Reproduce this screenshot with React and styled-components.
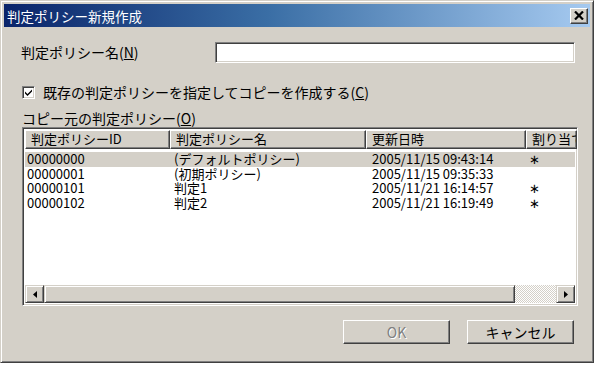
import React from 'react'
import styled, { createGlobalStyle } from 'styled-components'

const Global = createGlobalStyle`
  html, body {
    margin: 0;
    background: #ffffff;
  }
  body {
    font-family: "Noto Sans CJK JP", "Liberation Sans", sans-serif;
    font-size: 13px;
    color: #000;
  }
`

const Window = styled.div`
  width: 594px;
  height: 363px;
  box-sizing: border-box;
  background: #d4d0c8;
  border: 1px solid;
  border-color: #d4d0c8 #404040 #404040 #d4d0c8;
  box-shadow: inset 1px 1px 0 #ffffff, inset -1px -1px 0 #808080;
  padding: 3px;
  display: flex;
  flex-direction: column;
`

const TitleBar = styled.div`
  height: 23px;
  display: flex;
  align-items: center;
  justify-content: space-between;
  padding: 0 2px 0 3px;
  background: linear-gradient(to right, #0a246a 0%, #3a6ea5 45%, #a6caf0 100%);
  color: #fff;
  font-size: 13.5px;
`

const CloseButton = styled.div`
  width: 18px;
  height: 16px;
  box-sizing: border-box;
  background: #d4d0c8;
  border: 1px solid;
  border-color: #ffffff #404040 #404040 #ffffff;
  box-shadow: inset -1px -1px 0 #808080;
  display: flex;
  align-items: center;
  justify-content: center;
`

const Body = styled.div`
  flex: 1;
  display: flex;
  flex-direction: column;
  padding: 15px 15px 0 17px;
`

const FieldRow = styled.div`
  display: flex;
  align-items: center;
  height: 21px;
`

const Label = styled.span`
  white-space: nowrap;
  font-size: 14px;
  line-height: 15px;
`

const Key = styled.span`
  text-decoration: underline;
  text-underline-offset: 1px;
`

const TextInput = styled.div`
  margin-left: auto;
  width: 360px;
  height: 21px;
  box-sizing: border-box;
  background: #fff;
  border: 1px solid;
  border-color: #808080 #ffffff #ffffff #808080;
  box-shadow: inset 1px 1px 0 #404040, inset -1px -1px 0 #d4d0c8;
`

const CheckRow = styled.div`
  display: flex;
  align-items: center;
  gap: 8px;
  margin-top: 22px;
  padding-left: 1px;
  height: 15px;
`

const CheckBox = styled.div`
  width: 13px;
  height: 13px;
  box-sizing: border-box;
  background: #fff;
  border: 1px solid;
  border-color: #808080 #ffffff #ffffff #808080;
  box-shadow: inset 1px 1px 0 #404040, inset -1px -1px 0 #d4d0c8;
  display: flex;
  align-items: center;
  justify-content: center;
`

const SectionLabel = styled.div`
  margin-top: 11px;
  padding-left: 1px;
  height: 16px;
  font-size: 14px;
  line-height: 15px;
  white-space: nowrap;
`

const ListBox = styled.div`
  margin-left: 1px;
  width: 556px;
  height: 179px;
  box-sizing: border-box;
  background: #fff;
  border: 1px solid;
  border-color: #808080 #ffffff #ffffff #808080;
  box-shadow: inset 1px 1px 0 #404040, inset -1px -1px 0 #d4d0c8;
  padding: 2px;
  display: flex;
  flex-direction: column;
  overflow: hidden;
`

const Header = styled.div`
  display: grid;
  grid-template-columns: 145px 196px 160px 51px;
  height: 19px;
  flex-shrink: 0;
`

const HeaderCell = styled.div`
  box-sizing: border-box;
  background: #d4d0c8;
  border: 1px solid;
  border-color: #ffffff #404040 #404040 #ffffff;
  box-shadow: inset -1px -1px 0 #808080;
  padding-left: 5px;
  line-height: 16px;
  white-space: nowrap;
  overflow: hidden;
`

const Rows = styled.div`
  flex: 1;
  padding-top: 3px;
`

const Row = styled.div`
  display: grid;
  grid-template-columns: 145px 196px 160px 51px;
  height: 14.5px;
  line-height: 14.5px;
  background: ${p => (p.$selected ? '#d4d0c8' : 'transparent')};
`

const Cell = styled.div`
  padding-left: ${p => p.$pad || 4}px;
  white-space: nowrap;
`

const HScroll = styled.div`
  display: flex;
  height: 18px;
  flex-shrink: 0;
`

const ArrowButton = styled.div`
  width: 19px;
  box-sizing: border-box;
  background: #d4d0c8;
  border: 1px solid;
  border-color: #d4d0c8 #404040 #404040 #d4d0c8;
  box-shadow: inset 1px 1px 0 #ffffff, inset -1px -1px 0 #808080;
  display: flex;
  align-items: center;
  justify-content: center;
`

const Thumb = styled.div`
  width: 471px;
  box-sizing: border-box;
  background: #d4d0c8;
  border: 1px solid;
  border-color: #d4d0c8 #404040 #404040 #d4d0c8;
  box-shadow: inset 1px 1px 0 #ffffff, inset -1px -1px 0 #808080;
`

const Track = styled.div`
  flex: 1;
  background-color: #d4d0c8;
  background-image: repeating-conic-gradient(#ffffff 0 25%, #d4d0c8 0 50%);
  background-size: 2px 2px;
`

const ButtonRow = styled.div`
  display: flex;
  justify-content: flex-end;
  gap: 17px;
  margin-top: 14px;
  padding-right: 1px;
`

const Button = styled.div`
  width: 107px;
  height: 24px;
  box-sizing: border-box;
  background: #d4d0c8;
  border: 1px solid;
  border-color: #ffffff #404040 #404040 #ffffff;
  box-shadow: inset -1px -1px 0 #808080;
  display: flex;
  align-items: center;
  justify-content: center;
  font-size: 14px;
  color: ${p => (p.disabled ? '#808080' : '#000')};
  text-shadow: ${p => (p.disabled ? '1px 1px 0 #ffffff' : 'none')};
`

const policies = [
  { id: '00000000', name: '(デフォルトポリシー)', date: '2005/11/15 09:43:14', mark: '∗' },
  { id: '00000001', name: '(初期ポリシー)', date: '2005/11/15 09:35:33', mark: '' },
  { id: '00000101', name: '判定1', date: '2005/11/21 16:14:57', mark: '∗' },
  { id: '00000102', name: '判定2', date: '2005/11/21 16:19:49', mark: '∗' },
]

const App = () => {
  return (
    <>
      <Global />
      <Window>
        <TitleBar>
          <span>判定ポリシー新規作成</span>
          <CloseButton>
            <svg width="10" height="9" viewBox="0 0 10 9">
              <path d="M1 0.5 L9 8.5 M9 0.5 L1 8.5" stroke="#000" strokeWidth="2.2" />
            </svg>
          </CloseButton>
        </TitleBar>
        <Body>
          <FieldRow>
            <Label>判定ポリシー名(<Key>N</Key>)</Label>
            <TextInput />
          </FieldRow>
          <CheckRow>
            <CheckBox>
              <svg width="9" height="9" viewBox="0 0 9 9">
                <path d="M1 3.5 L3.5 6 L8 1.5 L8 3.5 L3.5 8 L1 5.5 Z" fill="#000" />
              </svg>
            </CheckBox>
            <Label>既存の判定ポリシーを指定してコピーを作成する(<Key>C</Key>)</Label>
          </CheckRow>
          <SectionLabel>コピー元の判定ポリシー(<Key>O</Key>)</SectionLabel>
          <ListBox>
            <Header>
              <HeaderCell>判定ポリシーID</HeaderCell>
              <HeaderCell>判定ポリシー名</HeaderCell>
              <HeaderCell>更新日時</HeaderCell>
              <HeaderCell>割り当て</HeaderCell>
            </Header>
            <Rows>
              {policies.map((p, i) => (
                <Row key={p.id} $selected={i === 0}>
                  <Cell $pad={2}>{p.id}</Cell>
                  <Cell $pad={4}>{p.name}</Cell>
                  <Cell $pad={6}>{p.date}</Cell>
                  <Cell $pad={3}>{p.mark}</Cell>
                </Row>
              ))}
            </Rows>
            <HScroll>
              <ArrowButton>
                <svg width="4" height="7" viewBox="0 0 4 7">
                  <path d="M4 0 L0 3.5 L4 7 Z" fill="#000" />
                </svg>
              </ArrowButton>
              <Thumb />
              <Track />
              <ArrowButton>
                <svg width="4" height="7" viewBox="0 0 4 7">
                  <path d="M0 0 L4 3.5 L0 7 Z" fill="#000" />
                </svg>
              </ArrowButton>
            </HScroll>
          </ListBox>
          <ButtonRow>
            <Button disabled>OK</Button>
            <Button>キャンセル</Button>
          </ButtonRow>
        </Body>
      </Window>
    </>
  )
}

export default App
